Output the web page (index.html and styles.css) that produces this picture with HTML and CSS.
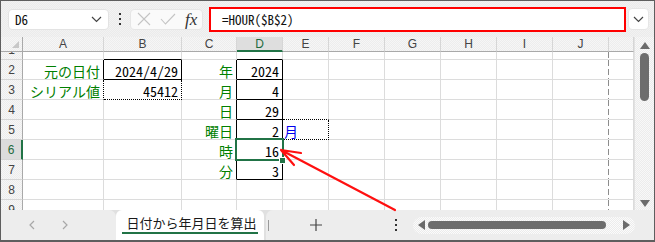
FILE: index.html
```html
<!DOCTYPE html>
<html lang="ja">
<head>
<meta charset="utf-8">
<link rel="stylesheet" href="styles.css">
</head>
<body>
<div class="app">
  <div class="toolbar">
    <div class="namebox">
      <span class="nb-text">D6</span>
      <svg class="chev" width="11" height="7" viewBox="0 0 11 7"><polyline points="1,1 5.5,5.5 10,1" fill="none" stroke="#444" stroke-width="1.2"/></svg>
    </div>
    <div class="vdots"><i></i><i></i><i></i></div>
    <div class="fbuttons">
      <svg class="ic" width="14" height="14" viewBox="0 0 14 14"><path d="M1 1L13 13M13 1L1 13" stroke="#c4c4c4" stroke-width="1.1" fill="none"/></svg>
      <svg class="ic" width="16" height="12" viewBox="0 0 16 12"><polyline points="1,6 5.5,11 15,1" stroke="#c4c4c4" stroke-width="1.1" fill="none"/></svg>
      <span class="fx">fx</span>
    </div>
    <div class="formula">=HOUR($B$2)</div>
    <div class="fdrop">
      <svg width="11" height="7" viewBox="0 0 11 7"><polyline points="1,1 5.5,5.5 10,1" fill="none" stroke="#444" stroke-width="1.2"/></svg>
    </div>
  </div>

  <div class="main">
    <div class="sheet">
      <!-- header row -->
      <div class="ch corner"><span class="tri"></span></div>
      <div class="ch">A</div><div class="ch">B</div><div class="ch">C</div><div class="ch act">D</div><div class="ch">E</div>
      <div class="ch">F</div><div class="ch">G</div><div class="ch">H</div><div class="ch">I</div><div class="ch">J</div><div class="ch"></div>

      <!-- row 1 -->
      <div class="rh">1</div>
      <div class="c"></div><div class="c bbk"></div><div class="c"></div><div class="c bbk"></div><div class="c"></div>
      <div class="c"></div><div class="c"></div><div class="c"></div><div class="c"></div><div class="c pb"></div><div class="c"></div>

      <!-- row 2 -->
      <div class="rh">2</div>
      <div class="c g r brk">元の日付</div><div class="c r brk bbk">2024/4/29</div><div class="c g r brk">年</div><div class="c r brk bbk">2024</div><div class="c"></div>
      <div class="c"></div><div class="c"></div><div class="c"></div><div class="c"></div><div class="c pb"></div><div class="c"></div>

      <!-- row 3 -->
      <div class="rh">3</div>
      <div class="c g r brd">シリアル値</div><div class="c r brd bbd">45412</div><div class="c g r brk">月</div><div class="c r brk bbk">4</div><div class="c"></div>
      <div class="c"></div><div class="c"></div><div class="c"></div><div class="c"></div><div class="c pb"></div><div class="c"></div>

      <!-- row 4 -->
      <div class="rh">4</div>
      <div class="c"></div><div class="c"></div><div class="c g r brk">日</div><div class="c r brk bbk">29</div><div class="c bbd"></div>
      <div class="c"></div><div class="c"></div><div class="c"></div><div class="c"></div><div class="c pb"></div><div class="c"></div>

      <!-- row 5 -->
      <div class="rh">5</div>
      <div class="c"></div><div class="c"></div><div class="c g r brk">曜日</div><div class="c r brk bbk">2</div><div class="c b brd bbd">月</div>
      <div class="c"></div><div class="c"></div><div class="c"></div><div class="c"></div><div class="c pb"></div><div class="c"></div>

      <!-- row 6 -->
      <div class="rh act">6</div>
      <div class="c"></div><div class="c"></div><div class="c g r brk">時</div><div class="c r brk bbk sel">16<span class="handle"></span></div><div class="c"></div>
      <div class="c"></div><div class="c"></div><div class="c"></div><div class="c"></div><div class="c pb"></div><div class="c"></div>

      <!-- row 7 -->
      <div class="rh">7</div>
      <div class="c"></div><div class="c"></div><div class="c g r brk">分</div><div class="c r brk bbk">3</div><div class="c"></div>
      <div class="c"></div><div class="c"></div><div class="c"></div><div class="c"></div><div class="c pb"></div><div class="c"></div>

      <!-- row 8 -->
      <div class="rh">8</div>
      <div class="c"></div><div class="c"></div><div class="c"></div><div class="c"></div><div class="c"></div>
      <div class="c"></div><div class="c"></div><div class="c"></div><div class="c"></div><div class="c pb"></div><div class="c"></div>

      <!-- row 9 -->
      <div class="rh">9</div>
      <div class="c"></div><div class="c"></div><div class="c"></div><div class="c"></div><div class="c"></div>
      <div class="c"></div><div class="c"></div><div class="c"></div><div class="c"></div><div class="c pb"></div><div class="c"></div>
    </div>
    <div class="vscroll">
      <svg class="vup" width="10" height="7" viewBox="0 0 10 7"><polygon points="5,0 10,7 0,7" fill="#6b6b6b"/></svg>
      <div class="vthumb"></div>
      <svg class="vdown" width="10" height="7" viewBox="0 0 10 7"><polygon points="0,0 10,0 5,7" fill="#6b6b6b"/></svg>
    </div>
  </div>

  <div class="tabbar">
    <div class="nav">
      <svg class="navarr" width="6" height="10" viewBox="0 0 6 10"><polyline points="5,1 1,5 5,9" fill="none" stroke="#a8a8a8" stroke-width="1.2"/></svg>
      <svg class="navarr" width="6" height="10" viewBox="0 0 6 10"><polyline points="1,1 5,5 1,9" fill="none" stroke="#a8a8a8" stroke-width="1.2"/></svg>
    </div>
    <div class="tab"><span class="tabtext">日付から年月日を算出</span></div>
    <div class="rest">
      <span class="sep"></span>
      <svg class="plus" width="12" height="12" viewBox="0 0 12 12"><path d="M6 0V12M0 6H12" stroke="#444" stroke-width="1.2"/></svg>
      <div class="hdots"><i></i><i></i><i></i></div>
      <div class="hscroll">
        <svg width="7" height="10" viewBox="0 0 7 10"><polygon points="7,0 7,10 0,5" fill="#6b6b6b"/></svg>
        <div class="hthumb"></div>
        <svg width="7" height="10" viewBox="0 0 7 10"><polygon points="0,0 7,5 0,10" fill="#6b6b6b"/></svg>
      </div>
    </div>
  </div>

  <svg class="arrow" width="655" height="242" viewBox="0 0 655 242">
    <path d="M395 210L281 150M281 150L301 153M281 150L294 165" stroke="#ff1010" stroke-width="2.2" fill="none" stroke-linecap="round"/>
  </svg>
</div>
</body>
</html>
```

FILE: styles.css
```css
* { box-sizing: border-box; margin: 0; padding: 0; }
body { margin: 0; width: 655px; height: 242px; overflow: hidden; background: #fff; }

.app {
  position: relative;
  width: 655px;
  height: 242px;
  border: 1px solid #5e5e5e;
  border-bottom-width: 2px;
  display: flex;
  flex-direction: column;
  background: #ececec;
  font-family: "Noto Sans CJK JP", sans-serif;
  overflow: hidden;
}

/* ---------- toolbar ---------- */
.toolbar {
  flex: none;
  height: 36px;
  display: flex;
  align-items: center;
  background: repeating-conic-gradient(#ebebeb 0 25%, #f2f2f2 0 50%) 0 0 / 2px 2px;
}
.namebox {
  margin-left: 7px;
  width: 101px;
  height: 21px;
  background: #fff;
  border: 1px solid #e3e3e3;
  border-radius: 4px;
  display: flex;
  align-items: center;
  justify-content: space-between;
  padding: 0 6px 0 6px;
}
.nb-text, .formula {
  font-family: "Noto Sans Mono CJK JP", "Liberation Mono", monospace;
  font-size: 13px;
  font-weight: 300;
  color: #111;
}
.vdots {
  margin-left: 6px;
  width: 10px;
  display: flex;
  flex-direction: column;
  align-items: center;
  gap: 3px;
}
.vdots i, .hdots i {
  display: block;
  width: 2px;
  height: 2px;
  background: #333;
}
.fbuttons {
  margin-left: 5px;
  width: 73px;
  height: 21px;
  background: #fafafa;
  border: 1px solid #e6e6e6;
  border-radius: 4px;
  display: flex;
  align-items: center;
  padding-left: 6px;
  gap: 9px;
}
.fx {
  font-family: "Liberation Serif", serif;
  font-style: italic;
  font-size: 17px;
  color: #333;
  line-height: 1;
}
.formula {
  margin-left: 6px;
  width: 417px;
  height: 25px;
  background: #fff;
  border: 2px solid #ff0000;
  padding-left: 11px;
  display: flex;
  align-items: center;
}
.fdrop {
  margin-left: 2px;
  width: 21px;
  height: 22px;
  background: #fff;
  border: 1px solid #e6e6e6;
  border-radius: 4px;
  display: flex;
  align-items: center;
  justify-content: center;
}

/* ---------- sheet ---------- */
.main {
  flex: none;
  height: 173px;
  display: flex;
  background: #fff;
}
.sheet {
  width: 633px;
  height: 173px;
  overflow: hidden;
  display: grid;
  grid-template-columns: 22px 81px 78px 55px 46px 46px 56px 56px 56px 56px 56px 25px;
  grid-template-rows: 15px 8px repeat(8, 20px);
}
.ch, .rh, .c {
  border-right: 1px solid #dcdcdc;
  border-bottom: 1px solid #dcdcdc;
  overflow: hidden;
  white-space: nowrap;
}
.ch {
  background: repeating-conic-gradient(#ededed 0 25%, #f6f6f6 0 50%) 0 0 / 2px 2px;
  border-bottom-color: #a9a9a9;
  border-right-color: #d6d6d6;
  font-family: "Liberation Sans", sans-serif;
  font-size: 12px;
  color: #444;
  display: flex;
  align-items: center;
  justify-content: center;
  line-height: 14px;
}
.ch.act {
  background: #dedede;
  color: #1d6b3e;
  border-bottom: 2px solid #217346;
}
.corner { position: relative; border-right-color: #a9a9a9; }
.tri {
  position: absolute;
  right: 3px;
  bottom: 3px;
  width: 0;
  height: 0;
  border-left: 7px solid transparent;
  border-bottom: 7px solid #c8c8c8;
}
.rh {
  background: repeating-conic-gradient(#ededed 0 25%, #f6f6f6 0 50%) 0 0 / 2px 2px;
  border-right-color: #a9a9a9;
  border-bottom-color: #d6d6d6;
  font-family: "Liberation Sans", sans-serif;
  font-size: 12px;
  color: #444;
  display: flex;
  align-items: flex-end;
  justify-content: center;
  line-height: 16px;
  padding-bottom: 1px;
}
.rh.act {
  background: #dcdcdc;
  color: #1d6b3e;
  border-right: 2px solid #217346;
}
.c {
  font-family: "Noto Sans Mono CJK JP", "Noto Sans CJK JP", monospace;
  font-weight: 300;
  font-size: 14px;
  color: #000;
  display: flex;
  align-items: flex-end;
  line-height: 16px;
  padding: 0 3px 0 3px;
}
.c.r { justify-content: flex-end; padding-right: 3px; }
.c.g { color: #008000; }
.c.b { color: #0000ee; padding-left: 1px; }
.brk { border-right-color: #000; }
.bbk { border-bottom-color: #000; }
.brd { border-right: 1px dotted #000; }
.bbd { border-bottom: 1px dotted #000; }
.pb {
  border-right-color: transparent;
  background: linear-gradient(to bottom, #8c8c8c 0 6px, transparent 6px 9px) right top / 1px 9px repeat-y;
  background-origin: border-box;
}
.sel { position: relative; overflow: visible; }
.sel::after {
  content: "";
  position: absolute;
  top: -2px;
  left: -2px;
  right: -2px;
  bottom: -2px;
  border: 2px solid #217346;
}
.handle {
  position: absolute;
  right: -4px;
  bottom: -5px;
  width: 7px;
  height: 7px;
  background: #217346;
  border: 1px solid #fff;
  z-index: 2;
}

.vscroll {
  position: relative;
  width: 20px;
  height: 173px;
  border-left: 1px solid #e2e2e2;
  background: repeating-conic-gradient(#ececec 0 25%, #f8f8f8 0 50%) 0 0 / 2px 2px;
  display: flex;
  flex-direction: column;
  align-items: center;
}
.vup { margin-top: 5px; }
.vthumb {
  margin-top: 4px;
  width: 9px;
  height: 48px;
  border-radius: 5px;
  background: #6d6d6d;
}
.vdown { margin-top: auto; margin-bottom: 3px; }

/* ---------- tab bar ---------- */
.tabbar {
  flex: none;
  height: 30px;
  display: flex;
  background: #e0e0e0;
}
.nav {
  width: 115px;
  background: #ededed;
  border-radius: 0 7px 0 0;
  display: flex;
  align-items: center;
  padding-left: 28px;
  gap: 27px;
}
.tab {
  width: 148px;
  background: #fff;
  border-radius: 6px 6px 0 0;
  display: flex;
  justify-content: center;
  align-items: flex-start;
  padding-top: 3px;
}
.tabtext {
  font-size: 13px;
  line-height: 19px;
  color: #1a1a1a;
  border-bottom: 2px solid #217346;
  padding: 0 1px 0 4px;
}
.rest {
  flex: 1;
  margin-left: 2px;
  background: #ededed;
  border-radius: 7px 0 0 0;
  display: flex;
  align-items: center;
}
.sep {
  margin-left: 2px;
  width: 1px;
  height: 11px;
  background: #9a9a9a;
}
.plus { margin-left: 41px; }
.hdots {
  margin-left: 73px;
  width: 2px;
  display: flex;
  flex-direction: column;
  gap: 3px;
}
.hscroll {
  margin-left: 16px;
  width: 222px;
  height: 17px;
  border-radius: 9px;
  background: repeating-conic-gradient(#ececec 0 25%, #fbfbfb 0 50%) 0 0 / 2px 2px;
  display: flex;
  align-items: center;
  padding: 0 5px 0 5px;
  gap: 3px;
}
.hthumb {
  flex: 1;
  height: 8px;
  border-radius: 4px;
  background: #6d6d6d;
  margin-right: 14px;
}

.arrow {
  position: absolute;
  left: -1px;
  top: -1px;
  pointer-events: none;
}
```
